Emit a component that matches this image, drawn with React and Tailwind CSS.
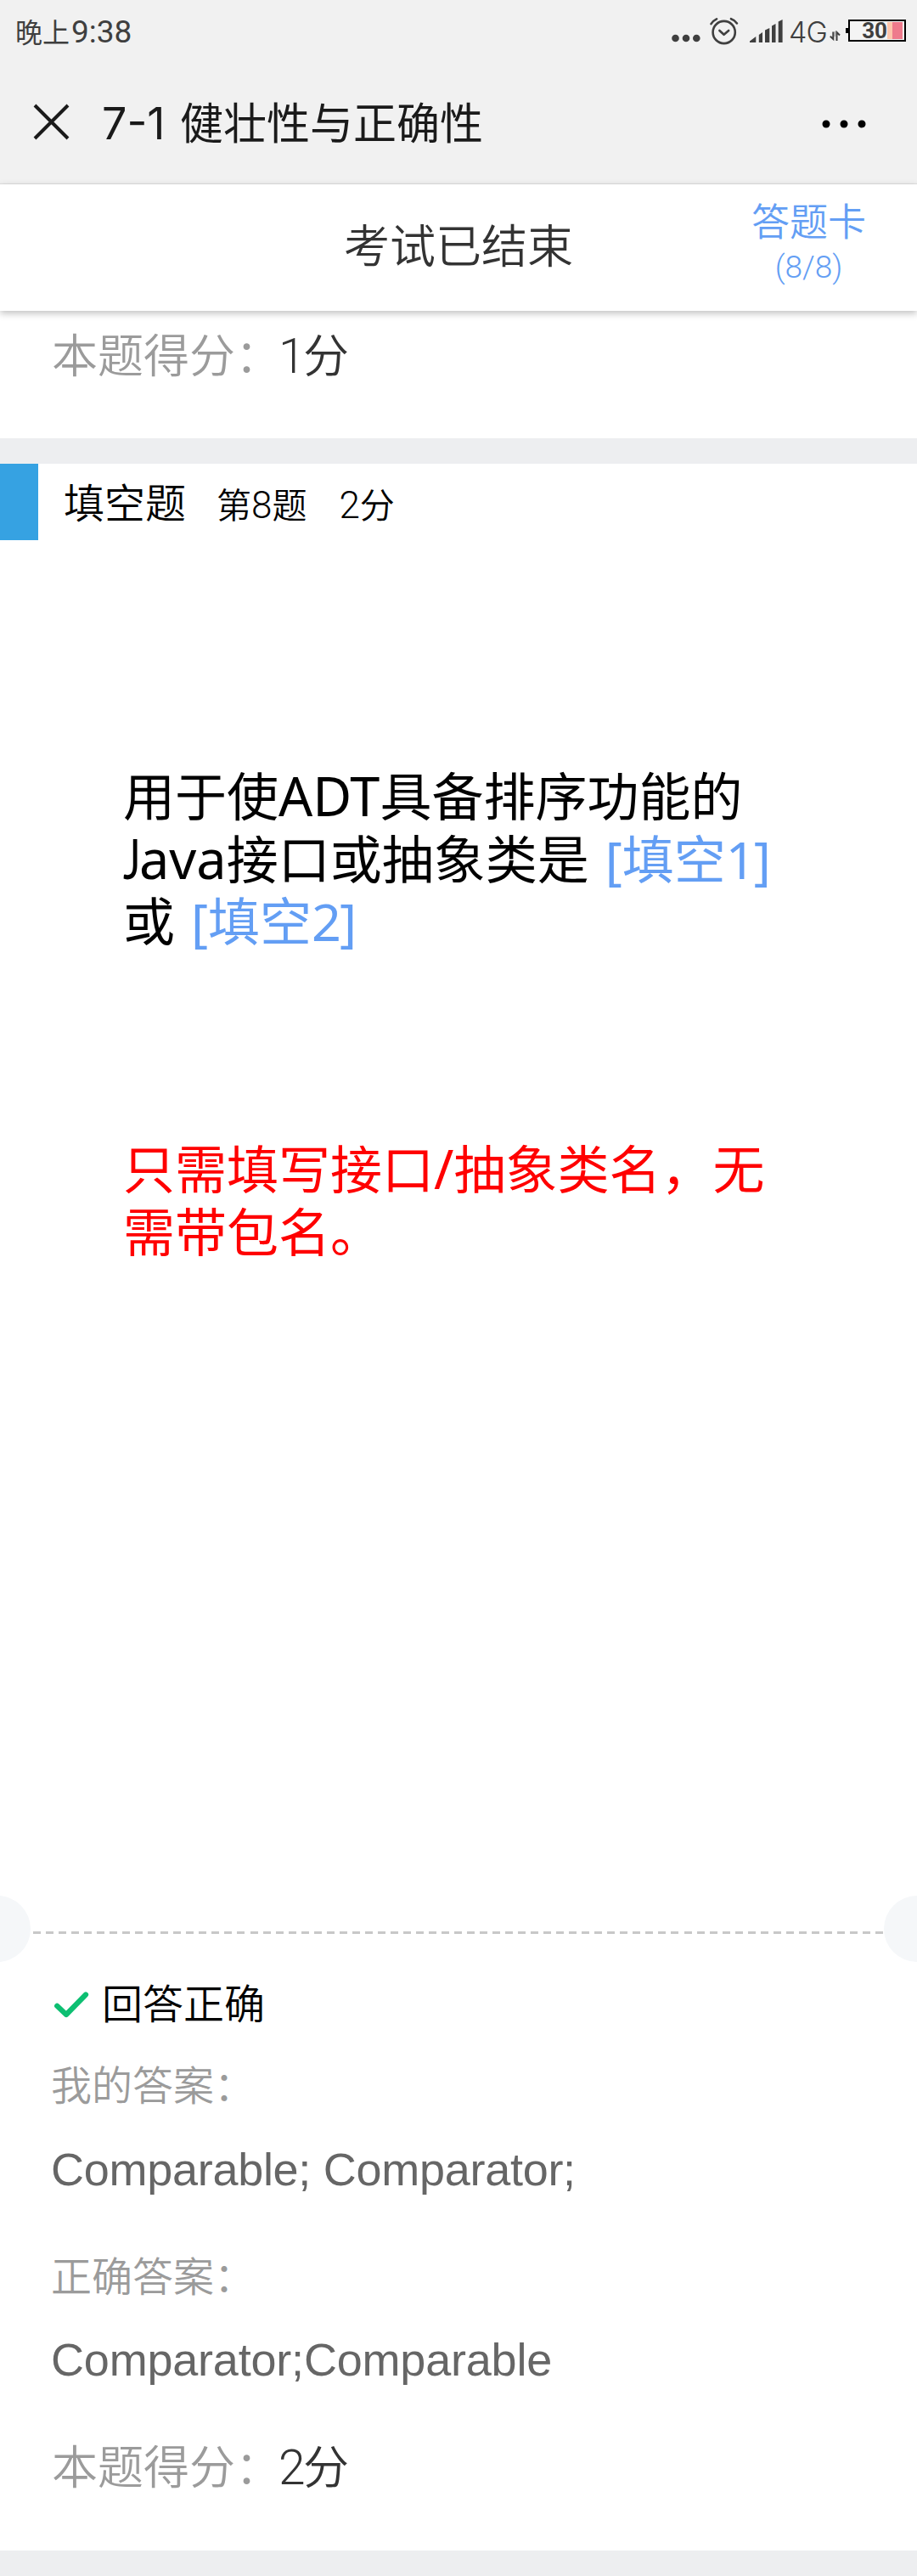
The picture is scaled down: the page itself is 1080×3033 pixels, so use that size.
const CJK = "font-['Noto_Sans_CJK_SC',sans-serif]";

function AlarmIcon() {
  return (
    <svg width="34" height="34" viewBox="0 0 34 34" fill="none" stroke="#3f3f3f" strokeWidth="2.6" strokeLinecap="round" strokeLinejoin="round">
      <circle cx="16.7" cy="18" r="13.1" />
      <path d="M11.4 16l5.2 4.8 5.6-4.8" />
      <path d="M1.5 8.2C3.2 5.400 5.300 3.700 8 2.400M31.900 7.400C30.200 4.900 27.900 3.200 25 2.200" />
    </svg>
  );
}

function SignalIcon() {
  return (
    <svg width="39" height="27" viewBox="0 0 39 27" fill="#3f3f3f">
      <path d="M0 27V25.500L7.300 20V27zM10.800 27V18L15 15V27zM18 27V12.500L23.300 10V27zM26 27V7.500L30.500 5V27zM33.700 27V2.500L38.600 0V27z" />
    </svg>
  );
}

function DataArrows() {
  return (
    <svg width="13" height="13" viewBox="0 0 13 13" fill="none" stroke="#3f3f3f" strokeWidth="2">
      <path d="M4.300 1.500V10L.8 6.800M8.500 12V2l3.500 3.500" />
      <path d="M6.200 1v6" strokeWidth="1" opacity=".5" />
    </svg>
  );
}

function Battery() {
  return (
    <div className="flex items-center">
      <div className="h-[6px] w-[3px] bg-black" />
      <div className="flex h-[26px] w-[68px] items-center justify-end border-2 border-black bg-[#f4f4f4] pr-[2px]">
        <span className="font-['Roboto',sans-serif] text-[26px] font-bold leading-[22px] text-[#3f3f3f]">30</span>
        <div className="h-[20px] w-[6px] bg-[#fdc5ac]" />
        <div className="h-[20px] w-[12px] bg-[#ee7a8c]" />
      </div>
    </div>
  );
}

function StatusBar() {
  return (
    <div className="flex h-[72px] items-start justify-between pl-[18px] pr-[13px] text-[#3f3f3f]">
      <div className="flex items-baseline leading-[73px]">
        <span className="text-[32px]">晚上</span>
        <span className="ml-[2px] font-['Roboto',sans-serif] text-[37px]">9:38</span>
      </div>
      <div className="flex h-[76px] items-center">
        <svg className="mt-[14px]" width="34" height="10" viewBox="0 0 34 10" fill="#3f3f3f">
          <circle cx="4.500" cy="5" r="4.300" />
          <circle cx="17" cy="5" r="4.300" />
          <circle cx="29.300" cy="5" r="4.300" />
        </svg>
        <div className="ml-[11px] mb-[3px]"><AlarmIcon /></div>
        <div className="ml-[13px] mb-[4px]"><SignalIcon /></div>
        <span className="ml-[7px] w-[48px] font-['Inter',sans-serif] text-[34px] font-[350] leading-[74px] tracking-[-1px]">4G</span>
        <div className="mt-[9px]"><DataArrows /></div>
        <div className="ml-[6px] mb-[4px]"><Battery /></div>
      </div>
    </div>
  );
}

function TitleBar() {
  return (
    <div className="flex h-[144px] items-start">
      <svg className="ml-[39px] mt-[50px]" width="43" height="43" viewBox="0 0 43 43" fill="none" stroke="#1a1a1a" strokeWidth="4">
        <path d="M2 2l39 39M41 2L2 41" />
      </svg>
      <h1 className="ml-[38px] flex items-baseline whitespace-nowrap text-[51px] font-normal leading-[140px] text-[#1a1a1a]">
        <span className="w-[92px] font-['Inter',sans-serif] text-[52px]">7-1</span>
        <span>健壮性与正确性</span>
      </h1>
      <svg className="ml-auto mr-[59px] mt-[69px]" width="53" height="10" viewBox="0 0 53 10">
        <circle cx="5" cy="5" r="4.500" />
        <circle cx="26" cy="5" r="4.500" />
        <circle cx="47" cy="5" r="4.500" />
      </svg>
    </div>
  );
}

function ExamBar() {
  return (
    <div className="relative grid h-[149px] grid-cols-[1fr_auto_1fr] bg-white shadow-[0_3px_8px_rgba(0,0,0,0.25)]">
      <div className="col-start-2 text-[54px] font-[350] leading-[139px] text-[#333]">考试已结束</div>
      <div className="mr-[60px] mt-[16px] flex flex-col items-center justify-self-end text-[#639ef4]">
        <span className="text-[45px] font-[350] leading-[52px]">答题卡</span>
        <span className="font-['Roboto',sans-serif] text-[37px] font-light leading-[60px]">(8/8)</span>
      </div>
    </div>
  );
}

function Score({ value }) {
  return (
    <div className="flex items-baseline pl-[61px] text-[54px] font-[350]">
      <span className="w-[267px] whitespace-nowrap text-[#9b9b9b]">本题得分：</span>
      <span className="w-[29px] font-['Roboto',sans-serif] text-[57px] text-[#333]">{value}</span>
      <span className="text-[#333]">分</span>
    </div>
  );
}

function QuestionHeader() {
  return (
    <div className="flex h-[90px] items-start">
      <div className="h-[90px] w-[45px] bg-[#36a2e2]" />
      <div className="ml-[30px] flex items-baseline leading-[86px] text-black">
        <span className="text-[48px] font-[350]">填空题</span>
        <span className="ml-[36px] text-[41px] font-[350]">第<span className="font-['Roboto',sans-serif] text-[44px]">8</span>题</span>
        <span className="ml-[38px] text-[41px] font-[350]"><span className="font-['Roboto',sans-serif] text-[44px]">2</span>分</span>
      </div>
    </div>
  );
}

function Latin({ children }) {
  return <span className="font-['Noto_Sans','Open_Sans',sans-serif] text-[63px]">{children}</span>;
}

function Blank({ n }) {
  return (
    <span className="ml-[19px] text-[#639ef4]">
      <span className="font-['Noto_Sans',sans-serif] text-[61px]">[</span>
      填空
      <span className="font-['Noto_Sans',sans-serif] text-[61px] tracking-[-2px]">{n}]</span>
    </span>
  );
}

function Slide() {
  return (
    <div className="h-[1596px] pl-[145px] pt-[262px] text-[61px] leading-[74px]">
      <div className="h-[439px] whitespace-nowrap text-black">
        <p className="h-[74px]">用于使<Latin>ADT</Latin>具备排序功能的</p>
        <p className="h-[73px]">
          <span className="inline-block w-[19px] origin-left scale-x-75 font-['Lato',sans-serif] text-[65px]">J</span>
          <Latin>ava</Latin>接口或抽象类是<Blank n="1" />
        </p>
        <p className="h-[74px]">或<Blank n="2" /></p>
      </div>
      <div className="whitespace-nowrap text-[#ff0000]">
        <p className="h-[74px]">只需填写接口<Latin>/</Latin>抽象类名，无</p>
        <p className="h-[74px]">需带包名。</p>
      </div>
    </div>
  );
}

function TicketDivider() {
  return (
    <div className="flex h-[78px] items-center overflow-hidden">
      <div className="-ml-[42px] size-[78px] shrink-0 rounded-full bg-[#f5f7f9]" />
      <div className="ml-[3px] mt-[9px] h-[3px] flex-1 bg-[repeating-linear-gradient(90deg,#c8c8c8_0_9px,transparent_9px_15.03px)]" />
      <div className="-mr-[39px] size-[78px] shrink-0 rounded-full bg-[#f5f7f9]" />
    </div>
  );
}

function Result() {
  return (
    <div className="h-[693px] pt-[16px] leading-[60px]">
      <div className="flex h-[96px] items-start pl-[64px] text-[48px] font-[350] text-black">
        <svg className="mt-[18px]" width="41" height="32" viewBox="0 0 41 32" fill="none" stroke="#0dbf72" strokeWidth="6.200" strokeLinecap="round" strokeLinejoin="round">
          <path d="M3.200 17.800L14 28 37 4.500" />
        </svg>
        <span className="ml-[15px]">回答正确</span>
      </div>
      <div className="h-[97px] pl-[60px] text-[48px] font-[350] text-[#9b9b9b]">我的答案：</div>
      <div className="h-[128px] pl-[60px] font-['Liberation_Sans',sans-serif] text-[54px] leading-[70px] tracking-[-0.28px] text-[#666]">Comparable; Comparator;</div>
      <div className="h-[96px] pl-[60px] text-[48px] font-[350] text-[#9b9b9b]">正确答案：</div>
      <div className="h-[129px] pl-[60px] font-['Liberation_Sans',sans-serif] text-[54px] leading-[70px] tracking-[-0.2px] text-[#666]">Comparator;Comparable</div>
      <Score value="2" />
    </div>
  );
}

export default function App() {
  return (
    <div className={`h-[3033px] w-[1080px] overflow-hidden bg-white ${CJK}`}>
      <header className="h-[217px] border-b border-[#e0e0e0] bg-[#f1f1f1]">
        <StatusBar />
        <TitleBar />
      </header>
      <ExamBar />
      <main>
        <section className="h-[150px] leading-[99px]">
          <Score value="1" />
        </section>
        <div className="h-[30px] bg-[#edeef0]" />
        <section>
          <QuestionHeader />
          <Slide />
          <TicketDivider />
          <Result />
        </section>
        <div className="h-[30px] bg-[#edeef0]" />
      </main>
    </div>
  );
}
